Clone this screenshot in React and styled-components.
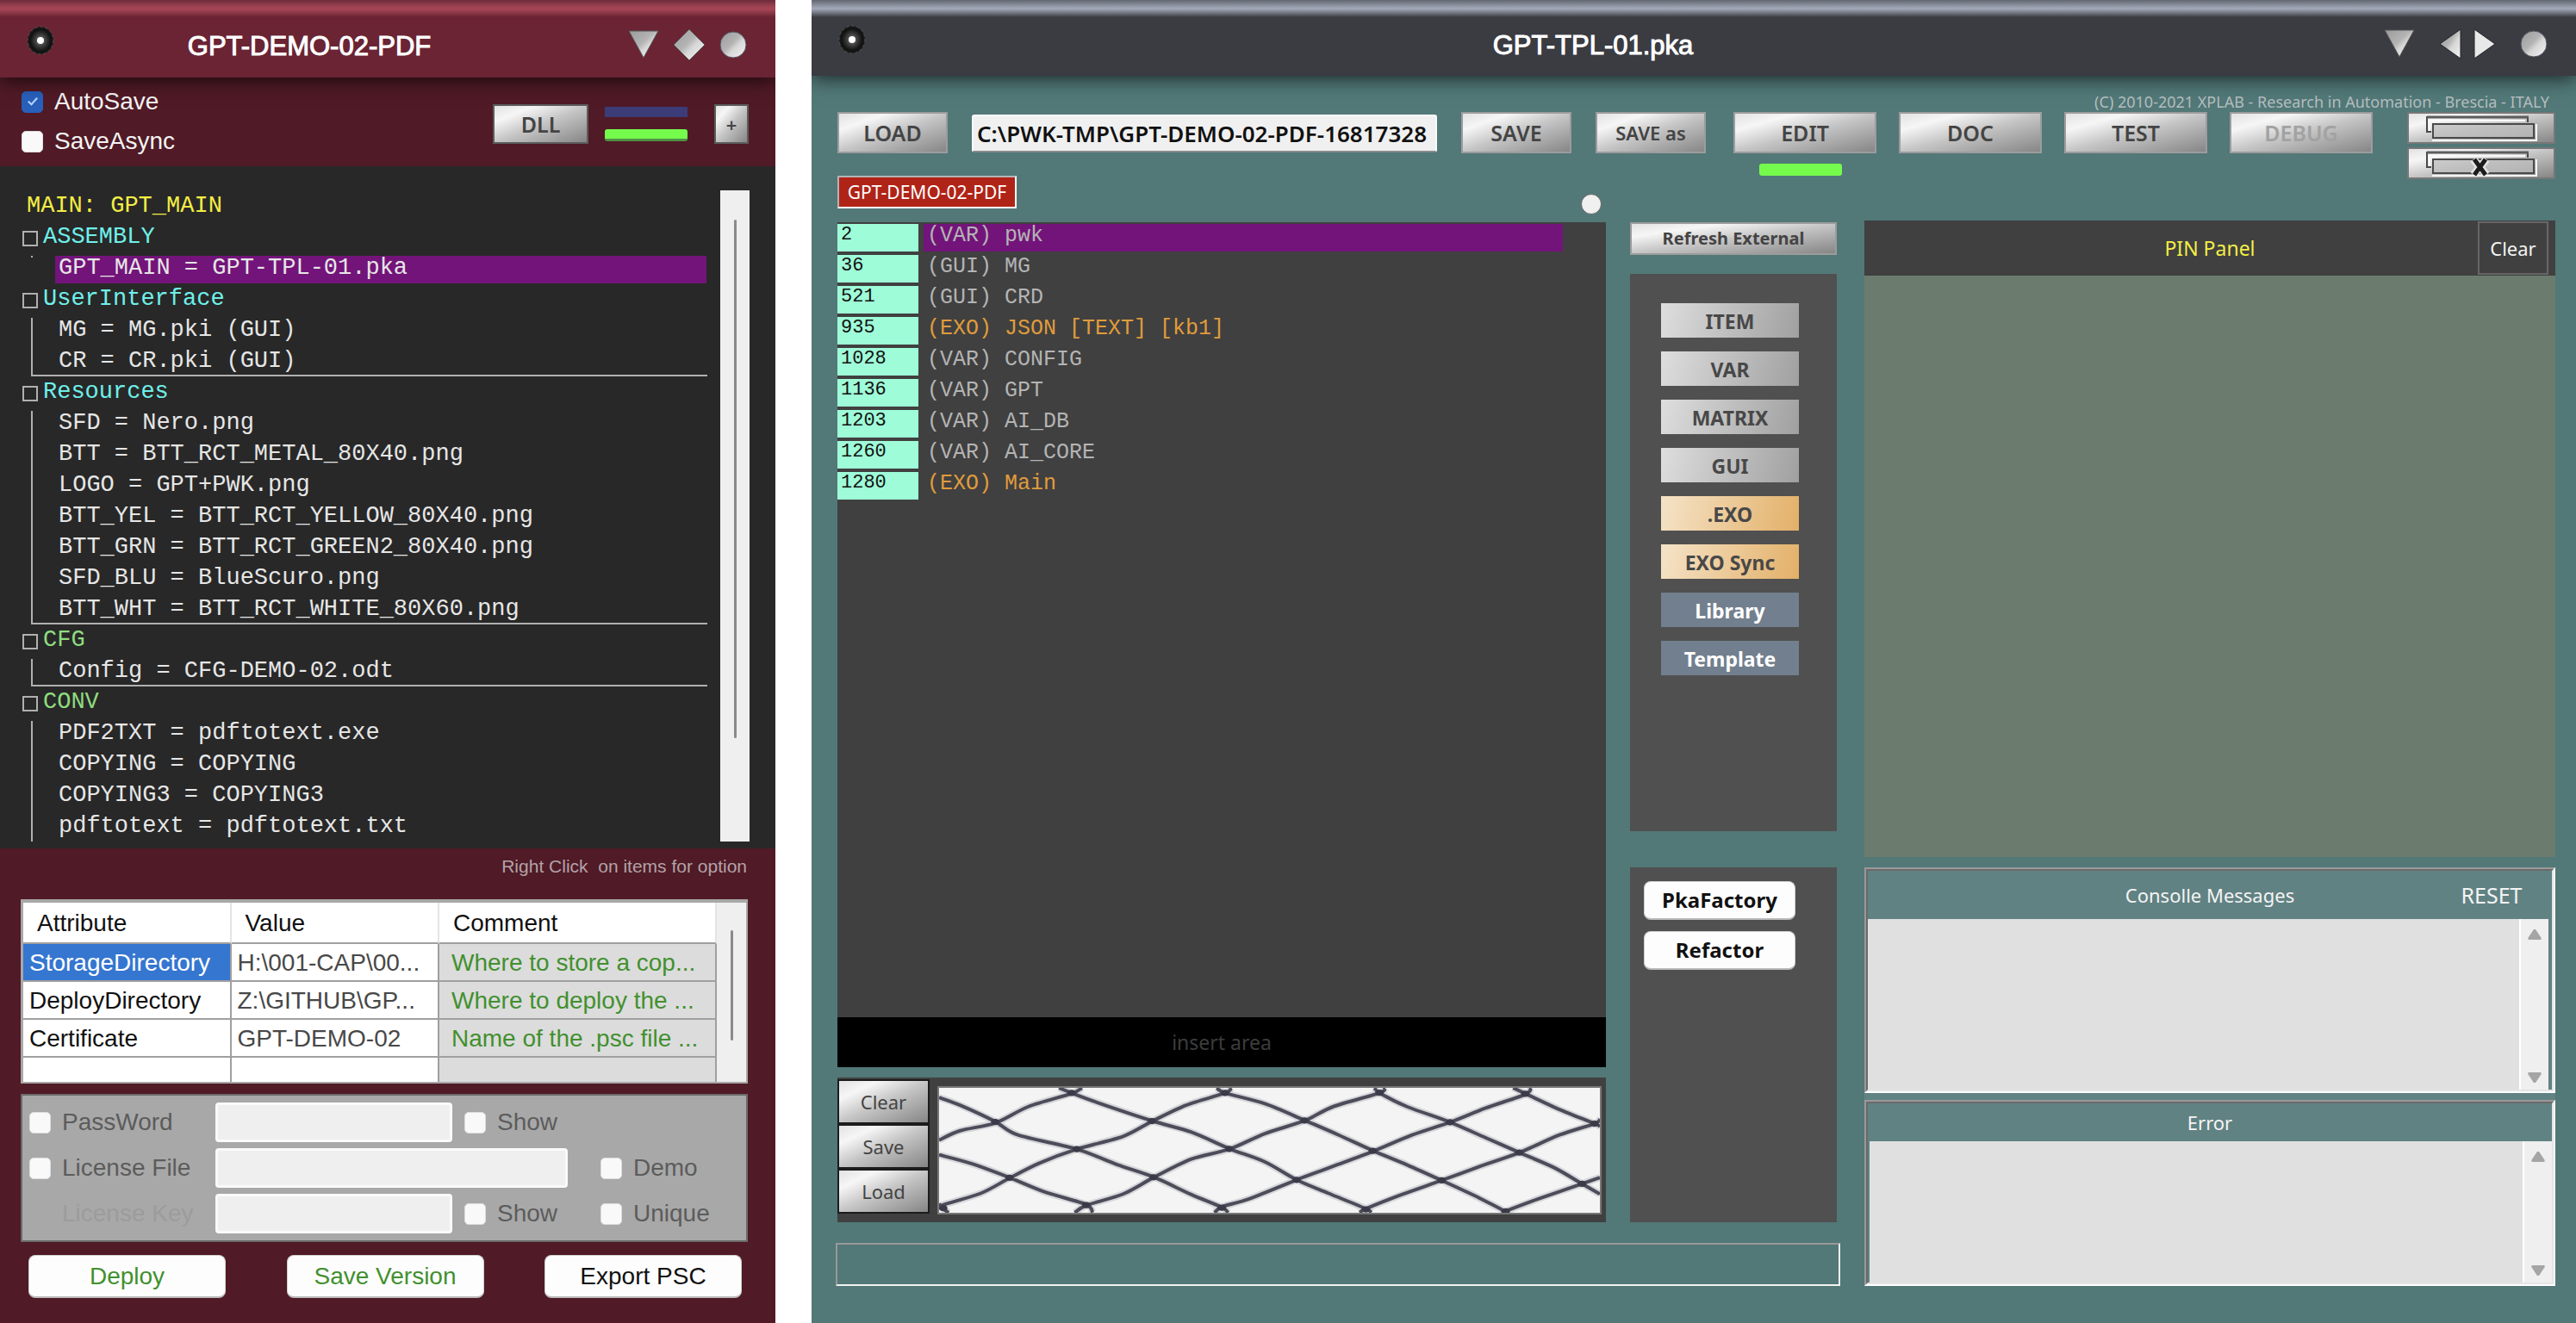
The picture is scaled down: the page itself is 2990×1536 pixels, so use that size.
import React from "react";
import styled, { createGlobalStyle, css } from "styled-components";

const sans = `"Liberation Sans", Arial, sans-serif`;
const ui = `"Noto Sans", "Open Sans", sans-serif`;
const mono = `"Liberation Mono", "Courier New", monospace`;

const metal = "linear-gradient(to bottom right, #e2e2e2 0%, #f6f6f6 22%, #c6c6c6 50%, #868686 100%)";

const GlobalStyle = createGlobalStyle`
  *, *::before, *::after { box-sizing: border-box; }
  body { margin: 0; background: #fff; }
  button, input, textarea { font: inherit; color: inherit; margin: 0; padding: 0; border: 0; background: none; border-radius: 0; }
  ul { list-style: none; margin: 0; padding: 0; }
`;

/* ---------- windows ---------- */

const Desktop = styled.div`
  display: flex;
  gap: 42px;
  min-height: 100vh;
  background: #fff;
`;

const Window = styled.section`
  display: flex;
  flex-direction: column;
  overflow: hidden;
  min-width: 0;
  background: ${(p) => p.$bg};
  flex: ${(p) => (p.$grow ? "1 1 0" : "0 0 900px")};
`;

const TitleBar = styled.header`
  position: relative;
  flex: none;
  display: flex;
  align-items: center;
  height: ${(p) => p.$h}px;
  padding: 14px 33px 0 31px;
  background: ${(p) => p.$stripe} top / 100% 20px no-repeat, ${(p) => p.$bg};
  box-shadow: 0 2px 22px rgba(0, 0, 0, 0.75);
`;

const Title = styled.h1`
  flex: 1;
  margin: 0;
  padding: 3px 74px 0 0;
  text-align: center;
  font: 400 31px/40px ${sans};
  color: #fff;
  -webkit-text-stroke: 1px #fff;
`;

const TitleTools = styled.div`
  display: flex;
  align-items: center;
  gap: ${(p) => p.$gap}px;
`;

const IconButton = styled.button`
  display: block;
  flex: none;
  margin-bottom: ${(p) => (p.$raised ? 10 : 0)}px;
  svg { display: block; }
`;

const Silver = ({ id }) => (
  <defs>
    <linearGradient id={id} x1="0" y1="0" x2="1" y2="1">
      <stop offset="0" stopColor="#9a9a9a" />
      <stop offset="0.45" stopColor="#b4b4b4" />
      <stop offset="0.6" stopColor="#d8d8d8" />
      <stop offset="1" stopColor="#f4f4f4" />
    </linearGradient>
  </defs>
);

const Disc = ({ id }) => (
  <IconButton $raised aria-label="Menu">
    <svg width="32" height="34" viewBox="0 0 32 34">
      <defs>
        <radialGradient id={id}>
          <stop offset="0" stopColor="#777" />
          <stop offset="0.45" stopColor="#3a3a3a" />
          <stop offset="0.8" stopColor="#111" />
          <stop offset="1" stopColor="#1c1c1c" />
        </radialGradient>
      </defs>
      <ellipse cx="16" cy="17" rx="15" ry="16" fill={`url(#${id})`} stroke="#555" strokeWidth="1" strokeDasharray="3 3" />
      <circle cx="16" cy="17" r="4" fill="#fff" />
    </svg>
  </IconButton>
);

const Minimize = ({ id }) => (
  <IconButton aria-label="Minimize">
    <svg width="36" height="34" viewBox="0 0 36 34">
      <Silver id={id} />
      <path d="M1 1H35L18 32Z" fill={`url(#${id})`} stroke="#555" strokeWidth="1" />
    </svg>
  </IconButton>
);

const Close = ({ id }) => (
  <IconButton aria-label="Close">
    <svg width="32" height="34" viewBox="0 0 32 34">
      <Silver id={id} />
      <circle cx="16" cy="17" r="15" fill={`url(#${id})`} stroke="#556" strokeWidth="1" />
    </svg>
  </IconButton>
);

/* ---------- shared controls ---------- */

const MetalButton = styled.button`
  flex: none;
  width: ${(p) => p.$w}px;
  height: ${(p) => p.$h}px;
  background: ${metal};
  border: 2px solid ${(p) => p.$edge || "#9c9c9c"};
  font: ${(p) => p.$weight || 600} ${(p) => p.$size || 25}px/32px ${ui};
  color: #444;
  white-space: nowrap;
  &:disabled { color: #a2a2a2; }
`;

const WhiteButton = styled.button`
  width: ${(p) => p.$w}px;
  height: ${(p) => p.$h}px;
  border-radius: 8px;
  border: 1px solid #d0d0d0;
  border-bottom: 2px solid #bbb;
  background: #fdfdfd;
  color: ${(p) => p.$color || "#111"};
  font: ${(p) => (p.$bold ? `700 24px/32px ${ui}` : `400 28px/32px ${sans}`)};
`;

const Lamp = styled.span`
  display: block;
  width: 96px;
  height: ${(p) => (p.$on ? 14 : 12)}px;
  border-radius: ${(p) => (p.$on ? 3 : 0)}px;
  background: ${(p) => (p.$on ? "#75fb4c" : "#3c3c78")};
  border-bottom: ${(p) => (p.$shade ? "3px solid #4f9147" : "0")};
`;

const Label = styled.label`
  display: flex;
  align-items: center;
  gap: 13px;
  height: 46px;
  font: 400 28px/32px ${sans};
  color: ${(p) => p.$color};
  white-space: nowrap;
`;

const Check = styled.input.attrs({ type: "checkbox" })`
  appearance: none;
  flex: none;
  display: grid;
  place-items: center;
  width: 25px;
  height: 25px;
  border-radius: 5px;
  border: 1px solid #ddd;
  background: #f9f9f9;
  &:checked {
    background: #2860ba;
    border-color: #2860ba;
  }
  &:checked::after {
    content: "";
    width: 6px;
    height: 11px;
    margin-bottom: 3px;
    border: solid #b8d4ff;
    border-width: 0 2px 2px 0;
    transform: rotate(42deg);
  }
`;

/* ---------- project window ---------- */

const Options = styled.div`
  display: flex;
  justify-content: space-between;
  height: 103px;
  padding: 5px 31px 0 25px;
`;

const OptionTools = styled.div`
  display: flex;
  padding-top: 26px;
  gap: 19px;
`;

const Lamps = styled.div`
  display: grid;
  align-content: start;
  gap: 14px;
  padding: 3px 12px 0 0;
`;

const TreePanel = styled.div`
  display: flex;
  justify-content: space-between;
  padding: 28px 30px 8px 26px;
  background: #282828;
`;

const Tree = styled.div`
  width: 795px;
  font: 400 27px/36px ${mono};
  color: #e6e6e6;
  white-space: pre;
`;

const TreeTitle = styled.div`
  padding-left: 5px;
  height: 36px;
  color: #f3ee45;
`;

const TreeHead = styled.div`
  display: flex;
  gap: 6px;
  height: 36px;
  color: ${(p) => p.$color};
  &::before {
    content: "";
    width: 18px;
    height: 18px;
    margin-top: 11px;
    border: 2px solid #b0b0b0;
  }
`;

const TreeList = styled.ul`
  margin-left: 10px;
  border-left: 2px solid ${(p) => (p.$line === "stub" ? "transparent" : "#b0b0b0")};
  border-bottom: ${(p) => (p.$line === "box" ? "2px solid #b0b0b0" : "0")};
  li:last-child { margin-bottom: ${(p) => (p.$line === "box" ? -2 : 0)}px; }
  ${(p) => p.$line === "stub" && css`
    border-image: linear-gradient(#b0b0b0 2px, transparent 2px) 0 0 0 2;
  `}
`;

const TreeItem = styled.li`
  height: 32px;
  margin: 4px 1px 0 26px;
  padding-left: 4px;
  line-height: 28px;
  background: ${(p) => (p.$on ? "#73147a" : "transparent")};
`;

const Scroll = styled.div`
  display: flex;
  justify-content: center;
  width: ${(p) => p.$w}px;
  padding: ${(p) => p.$pad};
  background: #efefef;
  &::before {
    content: "";
    width: 3px;
    border-radius: 2px;
    background: #8a8a8a;
  }
`;

const Hint = styled.p`
  margin: 0;
  padding-right: 33px;
  height: 59px;
  font: 400 21px/42px ${sans};
  color: #b3a3a8;
  text-align: right;
  white-space: pre;
`;

const Lower = styled.div`
  display: flex;
  flex-direction: column;
  padding: 0 32px 30px 24px;
`;

const TableFrame = styled.div`
  display: flex;
  height: 214px;
  overflow: hidden;
  border: 2px solid #a8a8a8;
  border-width: 4px 2px 2px 3px;
  background: #fff;
`;

const Table = styled.table`
  flex: 1;
  table-layout: fixed;
  border-collapse: separate;
  border-spacing: 0;
  font: 400 28px/32px ${sans};
  white-space: nowrap;
`;

const Th = styled.th`
  width: ${(p) => p.$w};
  height: 48px;
  padding: 2px 0 0 16px;
  text-align: left;
  font-weight: 400;
  color: #111;
  border-bottom: 2px solid #a0a0a0;
  border-right: 2px solid #e4e4e4;
`;

const cellKinds = {
  name: css`padding-left: 7px; color: #111; background: #fff;`,
  picked: css`padding-left: 7px; color: #fff; background: #3576d0;`,
  value: css`padding-left: 7px; color: #484848; background: #fff;`,
  note: css`padding-left: 14px; color: #42902f; background: #dcdcdc;`,
};

const Td = styled.td`
  height: 44px;
  padding: 2px 0 0;
  overflow: hidden;
  border-bottom: 2px solid #a0a0a0;
  border-right: 2px solid #a0a0a0;
  ${(p) => cellKinds[p.$kind]}
`;

const License = styled.div`
  display: grid;
  grid-template-columns: 216px 289px 158px 1fr;
  row-gap: 7px;
  margin-top: 12px;
  padding: 8px;
  border: 2px solid #6a6a6a;
  background: #a8a8a8;
`;

const Field = styled.input`
  width: 100%;
  height: 46px;
  padding: 0 8px;
  border: 3px solid #fafafa;
  border-radius: 4px;
  background: #efefef;
  font: 400 28px/32px ${sans};
`;

const FieldCell = styled.div`
  grid-column: ${(p) => (p.$wide ? "span 2" : "auto")};
  padding-right: ${(p) => (p.$wide ? 38 : 14)}px;
`;

const Faded = styled.label`
  padding-left: 38px;
  font: 400 28px/46px ${sans};
  color: #9c9c9c;
`;

const Actions = styled.div`
  display: flex;
  justify-content: space-between;
  margin-top: 15px;
  padding: 0 7px 0 9px;
`;

const groups = [
  { name: "ASSEMBLY", color: "#6ff0ea", line: "stub", items: ["GPT_MAIN = GPT-TPL-01.pka"] },
  { name: "UserInterface", color: "#6ff0ea", line: "box", items: ["MG = MG.pki (GUI)", "CR = CR.pki (GUI)"] },
  {
    name: "Resources", color: "#6ff0ea", line: "box", items: [
      "SFD = Nero.png",
      "BTT = BTT_RCT_METAL_80X40.png",
      "LOGO = GPT+PWK.png",
      "BTT_YEL = BTT_RCT_YELLOW_80X40.png",
      "BTT_GRN = BTT_RCT_GREEN2_80X40.png",
      "SFD_BLU = BlueScuro.png",
      "BTT_WHT = BTT_RCT_WHITE_80X60.png",
    ],
  },
  { name: "CFG", color: "#8fdc7f", line: "box", items: ["Config = CFG-DEMO-02.odt"] },
  {
    name: "CONV", color: "#8fdc7f", line: "open", items: [
      "PDF2TXT = pdftotext.exe",
      "COPYING = COPYING",
      "COPYING3 = COPYING3",
      "pdftotext = pdftotext.txt",
    ],
  },
];

const attributes = [
  ["StorageDirectory", "H:\\001-CAP\\00...", "Where to store a cop..."],
  ["DeployDirectory", "Z:\\GITHUB\\GP...", "Where to deploy the ..."],
  ["Certificate", "GPT-DEMO-02", "Name of the .psc file ..."],
  ["", "", ""],
];

const ProjectWindow = () => (
  <Window $bg="#501a26">
    <TitleBar $h={90} $bg="#6a2433" $stripe="linear-gradient(#6c2c3a, #a04353 40%, #a44555 55%, #6a2433)">
      <Disc id="discA" />
      <Title>GPT-DEMO-02-PDF</Title>
      <TitleTools $gap={16}>
        <Minimize id="minA" />
        <IconButton aria-label="Restore">
          <svg width="38" height="38" viewBox="0 0 38 38">
            <Silver id="diaA" />
            <path d="M19 1L37 19L19 37L1 19Z" fill="url(#diaA)" stroke="#555" strokeWidth="1" />
          </svg>
        </IconButton>
        <Close id="closeA" />
      </TitleTools>
    </TitleBar>

    <Options>
      <div>
        <Label $color="#f4f4f4"><Check defaultChecked />AutoSave</Label>
        <Label $color="#f4f4f4"><Check />SaveAsync</Label>
      </div>
      <OptionTools>
        <MetalButton $w={111} $h={46} $edge="#5c5c5c">DLL</MetalButton>
        <Lamps><Lamp /><Lamp $on $shade /></Lamps>
        <MetalButton $w={40} $h={46} $edge="#5c5c5c" $size={22}>+</MetalButton>
      </OptionTools>
    </Options>

    <TreePanel>
      <Tree>
        <TreeTitle>MAIN: GPT_MAIN</TreeTitle>
        {groups.map((g) => (
          <React.Fragment key={g.name}>
            <TreeHead $color={g.color}>{g.name}</TreeHead>
            <TreeList $line={g.line}>
              {g.items.map((t) => <TreeItem key={t} $on={g.line === "stub"}>{t}</TreeItem>)}
            </TreeList>
          </React.Fragment>
        ))}
      </Tree>
      <Scroll $w={34} $pad="34px 0 120px" />
    </TreePanel>

    <Hint>{"Right Click  on items for option"}</Hint>

    <Lower>
      <TableFrame>
        <Table>
          <thead>
            <tr><Th $w="30%">Attribute</Th><Th $w="30%">Value</Th><Th $w="40%">Comment</Th></tr>
          </thead>
          <tbody>
            {attributes.map(([a, v, c], i) => (
              <tr key={i}>
                <Td $kind={i === 0 ? "picked" : "name"}>{a}</Td>
                <Td $kind="value">{v}</Td>
                <Td $kind="note">{c}</Td>
              </tr>
            ))}
          </tbody>
        </Table>
        <Scroll $w={34} $pad="32px 0 48px" />
      </TableFrame>

      <License>
        <Label $color="#5c5c5c"><Check />PassWord</Label>
        <FieldCell><Field aria-label="PassWord" /></FieldCell>
        <Label $color="#5c5c5c"><Check />Show</Label>
        <span />
        <Label $color="#5c5c5c"><Check />License File</Label>
        <FieldCell $wide><Field aria-label="License File" /></FieldCell>
        <Label $color="#5c5c5c"><Check />Demo</Label>
        <Faded htmlFor="license-key">License Key</Faded>
        <FieldCell><Field id="license-key" /></FieldCell>
        <Label $color="#5c5c5c"><Check />Show</Label>
        <Label $color="#5c5c5c"><Check />Unique</Label>
      </License>

      <Actions>
        <WhiteButton $w={229} $h={50} $color="#42902f">Deploy</WhiteButton>
        <WhiteButton $w={229} $h={50} $color="#42902f">Save Version</WhiteButton>
        <WhiteButton $w={229} $h={50}>Export PSC</WhiteButton>
      </Actions>
    </Lower>
  </Window>
);

/* ---------- editor window ---------- */

const Copyright = styled.p`
  margin: 18px 0 0;
  padding-right: 31px;
  font: 400 18px/24px ${ui};
  color: #b4bebe;
  text-align: right;
`;

const Toolbar = styled.div`
  display: flex;
  align-items: flex-start;
  justify-content: space-between;
  height: 74px;
  padding: 0 24px 0 30px;
`;

const FileTools = styled.div`
  flex: 1;
  display: flex;
  gap: 28px;
  margin-right: 32px;
`;

const ModeTools = styled.div`
  display: flex;
  gap: 26px;
  margin-right: 40px;
`;

const Mode = styled.div`
  display: grid;
  gap: 12px;
  > span { margin-left: 30px; }
`;

const PathField = styled.input`
  flex: 1;
  min-width: 0;
  height: 44px;
  margin-top: 3px;
  padding: 0 4px;
  border: 2px solid #fafafa;
  border-bottom-color: #8a8a8a;
  border-radius: 3px;
  background: #f0f0f0;
  font: 600 26px/32px ${ui};
  color: #111;
`;

const StackTools = styled.div`
  display: grid;
  gap: 4px;
`;

const StackButton = styled.button`
  display: block;
  width: 172px;
  height: 37px;
  border: 2px solid #777;
  background: ${metal};
  svg { display: block; }
`;

const Body = styled.div`
  flex: 1;
  display: grid;
  grid-template-columns: 1160fr 802fr;
  gap: 32px;
  padding: 0 24px 44px 30px;
`;

const Main = styled.div`
  display: grid;
  grid-template-columns: minmax(0, 1fr) 240px;
  grid-template-rows: 54px 1fr 74px;
  column-gap: 28px;
`;

const Tabs = styled.div`
  grid-column: 1;
  display: flex;
  justify-content: space-between;
  align-items: flex-start;
`;

const Tab = styled.button`
  width: 208px;
  height: 38px;
  border: 2px solid;
  border-color: #b4b4b4 #fff #fff #b4b4b4;
  background: #b02418;
  font: 400 21px/28px ${ui};
  color: #fff;
`;

const Dot = styled.button`
  width: 24px;
  height: 24px;
  margin: 21px 5px 0 0;
  border: 1px solid #666;
  border-radius: 50%;
  background: #f0f0f0;
`;

const Column = styled.div`
  display: flex;
  flex-direction: column;
  grid-row: 2;
`;

const Editor = styled.div`
  flex: 1;
  padding-top: 2px;
  background: #404040;
`;

const Line = styled.li`
  display: flex;
  gap: 6px;
  height: 32px;
  margin-bottom: 4px;
  font: 400 25px/28px ${mono};
  color: ${(p) => (p.$exo ? "#e09c3c" : "#b4b4b4")};
`;

const LineNo = styled.span`
  width: 94px;
  padding-left: 4px;
  background: #9ffcd8;
  font-size: 22px;
  line-height: 26px;
  color: #111;
`;

const LineText = styled.span`
  flex: 1;
  margin-right: 50px;
  padding-left: 4px;
  background: ${(p) => (p.$on ? "#73147a" : "transparent")};
`;

const Insert = styled.div`
  height: 58px;
  background: #000;
  font: 400 23px/58px ${ui};
  color: #3c3c3c;
  text-align: center;
`;

const Clipboard = styled.div`
  display: flex;
  gap: 9px;
  height: 168px;
  margin-top: 12px;
  padding: 2px 5px 9px 0;
  background: #404040;
`;

const ClipTools = styled.div`
  display: grid;
  align-content: start;
`;

const Mesh = styled.svg`
  flex: 1;
  min-width: 0;
  height: 149px;
  margin-top: 8px;
  border: 2px solid #777;
  background: #f4f4f4;
`;

const Status = styled.output`
  grid-column: 1 / -1;
  margin: 24px -4px 0 -2px;
  border: 2px solid;
  border-color: #999 #f2f2f2 #f2f2f2 #999;
`;

const Palette = styled.div`
  display: flex;
  flex-direction: column;
  align-items: flex-start;
  gap: ${(p) => p.$gap}px;
  padding: ${(p) => p.$pad};
  flex: ${(p) => p.$grow} 0 auto;
  margin-top: ${(p) => p.$top}px;
  min-height: 412px;
  background: #505050;
`;

const paletteKinds = {
  grey: css`background: linear-gradient(105deg, #dedede, #a0a0a0); color: #484848;`,
  sand: css`background: linear-gradient(105deg, #f5e3c8, #e3b068); color: #484848;`,
  blue: css`background: #727f8e; color: #fff;`,
};

const PaletteButton = styled.button`
  width: 160px;
  height: 40px;
  padding-top: 2px;
  font: 700 23px/32px ${ui};
  ${(p) => paletteKinds[p.$kind]}
`;

const Side = styled.div`
  display: flex;
  flex-direction: column;
  margin-top: 52px;
`;

const PinHead = styled.div`
  display: grid;
  grid-template-columns: 90px 1fr 90px;
  align-items: center;
  height: 64px;
  background: #404040;
  font: 400 23px/32px ${ui};
  color: #f3ee45;
  text-align: center;
`;

const PinClear = styled.button`
  width: 82px;
  height: 62px;
  border: 2px solid #666;
  font: 400 22px/32px ${ui};
  color: #f4f4f4;
`;

const PinBody = styled.div`
  flex: 1;
  background: #6b7c6e;
`;

const Messages = styled.div`
  display: grid;
  gap: 8px;
  margin-top: 12px;
  background: #618283;
`;

const MessageBox = styled.section`
  display: flex;
  flex-direction: column;
  height: ${(p) => p.$h}px;
  border: 2px solid;
  border-color: #999 #fff #fff #999;
  background: #618283;
`;

const MessageInner = styled.div`
  flex: 1;
  display: flex;
  flex-direction: column;
  border: 2px solid;
  border-color: #6a6a6a #e4e4e4 #e4e4e4 #6a6a6a;
`;

const MessageHead = styled.div`
  display: grid;
  grid-template-columns: 140px 1fr 140px;
  align-items: center;
  height: ${(p) => p.$h}px;
  font: 400 22px/32px ${ui};
  color: #f4f4f4;
  text-align: center;
  h2 { grid-column: 2; margin: 0; font: inherit; }
  button { font-size: 25px; }
`;

const MessageRow = styled.div`
  flex: 1;
  display: flex;
  padding: ${(p) => p.$pad};
`;

const MessageText = styled.textarea`
  flex: 1;
  resize: none;
  padding: 6px;
  background: #e0e0e0;
  font: 400 23px/32px ${ui};
`;

const ArrowRail = styled.div`
  display: flex;
  flex-direction: column;
  justify-content: space-between;
  align-items: center;
  width: 34px;
  padding: 11px 0 7px;
  border-left: 2px solid #fff;
  background: #efefef;
`;

const Rail = () => (
  <ArrowRail>
    <svg width="18" height="14" viewBox="0 0 16 13"><path d="M7 1H9L15 10V12H1V10Z" fill="#a5a5a5" /></svg>
    <svg width="18" height="14" viewBox="0 0 16 13"><path d="M1 1H15V3L9 12H7L1 3Z" fill="#a5a5a5" /></svg>
  </ArrowRail>
);

const StackIcon = ({ crossed }) => (
  <svg width="168" height="33" viewBox="0 0 168 33" fill="none">
    <path d="M26 21H21V4H138V10" stroke="#4a4a4a" strokeWidth="2" />
    <path d="M21 4H139" stroke="#5c5c5c" strokeWidth="3" />
    <path d="M24 20V8H135" stroke="#fafafa" strokeWidth="2" />
    <rect x="28" y="12" width="117" height="16" fill="#bdbdbd" fillOpacity="0.7" stroke="#4a4a4a" strokeWidth="2" />
    <path d="M27 31H148V12" stroke="#f4f4f4" strokeWidth="2" />
    {crossed && <path d="M75 12L90 30M90 12L75 30" stroke="#e4e4e4" strokeWidth="9" />}
    {crossed && <path d="M76 12L89 30M89 12L76 30" stroke="#1c1c1c" strokeWidth="5" />}
  </svg>
);

/* Wire strands of the fence, as points joined by a smooth curve. */
const strands = [
  [[260, 398], [300, 425], [366, 482], [410, 530], [522, 580], [600, 635], [668, 678], [740, 740], [798, 785], [810, 804]],
  [[488, 364], [512, 382], [560, 415], [665, 480], [740, 520], [812, 578], [880, 625], [940, 688], [1000, 735], [1072, 790], [1082, 804]],
  [[788, 364], [804, 382], [880, 420], [955, 478], [1020, 530], [1085, 585], [1150, 635], [1216, 690], [1280, 745], [1338, 800]],
  [[1088, 364], [1098, 382], [1150, 430], [1232, 485], [1300, 540], [1364, 592], [1430, 645], [1483, 702], [1517, 738]],
  [[1352, 364], [1375, 384], [1440, 440], [1507, 490], [1517, 500]],
  [[260, 600], [320, 630], [394, 680], [460, 730], [540, 775], [552, 804]],
  [[260, 772], [267, 788], [278, 804]],
  [[260, 548], [300, 515], [368, 487], [430, 430], [512, 384], [532, 364]],
  [[260, 790], [268, 776], [340, 735], [394, 682], [450, 630], [522, 580], [610, 535], [665, 482], [730, 425], [804, 382], [816, 364]],
  [[518, 804], [540, 778], [610, 738], [668, 680], [740, 615], [812, 580], [880, 525], [955, 480], [1010, 430], [1098, 382], [1108, 364]],
  [[784, 804], [798, 783], [850, 755], [940, 688], [1010, 640], [1085, 588], [1160, 530], [1232, 485], [1300, 435], [1375, 387], [1386, 364]],
  [[1060, 804], [1072, 790], [1140, 740], [1216, 690], [1290, 640], [1364, 592], [1440, 530], [1507, 490], [1517, 475]],
  [[1330, 804], [1338, 798], [1400, 755], [1483, 702], [1517, 680]],
];

const curve = (pts) =>
  pts.slice(1).reduce((d, p, i) => {
    const a = pts[Math.max(i - 1, 0)];
    const b = pts[i];
    const c = pts[Math.min(i + 2, pts.length - 1)];
    const c1 = [b[0] + (p[0] - a[0]) / 7, b[1] + (p[1] - a[1]) / 7];
    const c2 = [p[0] - (c[0] - b[0]) / 7, p[1] - (c[1] - b[1]) / 7];
    return `${d}C${c1.join(" ")} ${c2.join(" ")} ${p.join(" ")}`;
  }, `M${pts[0].join(" ")}`);

const fence = strands.map(curve).join("");
const knots = [
  [512, 382], [804, 382], [1098, 381], [1375, 385], [367, 484], [665, 481], [955, 479], [1232, 485], [1507, 490],
  [522, 580], [812, 579], [1085, 586], [1364, 592], [394, 681], [668, 679], [940, 688], [1216, 690], [1483, 702],
  [268, 788], [540, 777], [798, 786], [1072, 792], [1338, 799],
];

const lines = [
  [2, "(VAR) pwk"],
  [36, "(GUI) MG"],
  [521, "(GUI) CRD"],
  [935, "(EXO) JSON [TEXT] [kb1]"],
  [1028, "(VAR) CONFIG"],
  [1136, "(VAR) GPT"],
  [1203, "(VAR) AI_DB"],
  [1260, "(VAR) AI_CORE"],
  [1280, "(EXO) Main"],
];

const palette = [
  ["ITEM", "grey"], ["VAR", "grey"], ["MATRIX", "grey"], ["GUI", "grey"],
  [".EXO", "sand"], ["EXO Sync", "sand"], ["Library", "blue"], ["Template", "blue"],
];

const EditorWindow = () => (
  <Window $grow $bg="#527878">
    <TitleBar $h={88} $bg="#3a3c42" $stripe="linear-gradient(#62666f, #9297a5 35%, #a3a9ba 50%, #7c808c 70%, #3a3c42)">
      <Disc id="discB" />
      <Title>GPT-TPL-01.pka</Title>
      <TitleTools $gap={27}>
        <Minimize id="minB" />
        <IconButton aria-label="Resize">
          <svg width="68" height="38" viewBox="0 0 68 38">
            <Silver id="pairB" />
            <path d="M26 2V36L2 19Z" fill="url(#pairB)" stroke="#222" strokeWidth="1" />
            <path d="M42 2V36L66 19Z" fill="#e8e8e8" stroke="#222" strokeWidth="1" />
          </svg>
        </IconButton>
        <Close id="closeB" />
      </TitleTools>
    </TitleBar>

    <Copyright>(C) 2010-2021 XPLAB - Research in Automation - Brescia - ITALY</Copyright>

    <Toolbar>
      <FileTools>
        <MetalButton $w={128} $h={48}>LOAD</MetalButton>
        <PathField aria-label="Path" defaultValue="C:\PWK-TMP\GPT-DEMO-02-PDF-16817328" />
        <MetalButton $w={128} $h={48}>SAVE</MetalButton>
        <MetalButton $w={128} $h={48} $size={22}>SAVE as</MetalButton>
      </FileTools>
      <ModeTools>
        <Mode>
          <MetalButton $w={166} $h={48}>EDIT</MetalButton>
          <Lamp $on />
        </Mode>
        <MetalButton $w={166} $h={48}>DOC</MetalButton>
        <MetalButton $w={166} $h={48}>TEST</MetalButton>
        <MetalButton $w={166} $h={48} disabled>DEBUG</MetalButton>
      </ModeTools>
      <StackTools>
        <StackButton aria-label="Windows"><StackIcon /></StackButton>
        <StackButton aria-label="Close windows"><StackIcon crossed /></StackButton>
      </StackTools>
    </Toolbar>

    <Body>
      <Main>
        <Tabs>
          <Tab>GPT-DEMO-02-PDF</Tab>
          <Dot aria-label="Marker" />
        </Tabs>

        <Column>
          <Editor>
            <ul>
              {lines.map(([n, t], i) => (
                <Line key={n} $exo={t.startsWith("(EXO)")}>
                  <LineNo>{n}</LineNo>
                  <LineText $on={i === 0}>{t}</LineText>
                </Line>
              ))}
            </ul>
          </Editor>
          <Insert>insert area</Insert>
          <Clipboard>
            <ClipTools>
              {["Clear", "Save", "Load"].map((t) => (
                <MetalButton key={t} $w={107} $h={52} $edge="#1c1c1c" $weight={400} $size={22}>{t}</MetalButton>
              ))}
            </ClipTools>
            <Mesh viewBox="260 364 1257 440" preserveAspectRatio="none" fill="none">
              <path d={fence} stroke="#b8b8c0" strokeWidth="8" strokeOpacity="0.5" vectorEffect="non-scaling-stroke" />
              <path d={fence} stroke="#4c4c5a" strokeWidth="4" vectorEffect="non-scaling-stroke" />
              {knots.map(([x, y]) => <ellipse key={`${x}-${y}`} cx={x} cy={y} rx="8" ry="11" fill="#3a3a48" />)}
            </Mesh>
          </Clipboard>
        </Column>

        <Column>
          <MetalButton $w={240} $h={38} $size={20} $weight={700}>Refresh External</MetalButton>
          <Palette $top={22} $gap={16} $pad="34px 36px" $grow={1}>
            {palette.map(([t, k]) => <PaletteButton key={t} $kind={k}>{t}</PaletteButton>)}
          </Palette>
          <Palette $top={42} $gap={13} $pad="16px" $grow={0}>
            <WhiteButton $w={176} $h={45} $bold>PkaFactory</WhiteButton>
            <WhiteButton $w={176} $h={45} $bold>Refactor</WhiteButton>
          </Palette>
        </Column>

        <Status />
      </Main>

      <Side>
        <PinHead>
          <span />
          <span>PIN Panel</span>
          <PinClear>Clear</PinClear>
        </PinHead>
        <PinBody />
        <Messages>
          <MessageBox $h={262}>
            <MessageInner>
              <MessageHead $h={56}>
                <h2>Consolle Messages</h2>
                <button>RESET</button>
              </MessageHead>
              <MessageRow $pad="0 4px 0 0">
                <MessageText aria-label="Consolle Messages" readOnly />
                <Rail />
              </MessageRow>
            </MessageInner>
          </MessageBox>
          <MessageBox $h={216}>
            <MessageInner>
              <MessageHead $h={44}><h2>Error</h2></MessageHead>
              <MessageRow $pad="0 0 0 2px">
                <MessageText aria-label="Error" readOnly />
                <Rail />
              </MessageRow>
            </MessageInner>
          </MessageBox>
        </Messages>
      </Side>
    </Body>
  </Window>
);

export default function App() {
  return (
    <>
      <GlobalStyle />
      <Desktop>
        <ProjectWindow />
        <EditorWindow />
      </Desktop>
    </>
  );
}
